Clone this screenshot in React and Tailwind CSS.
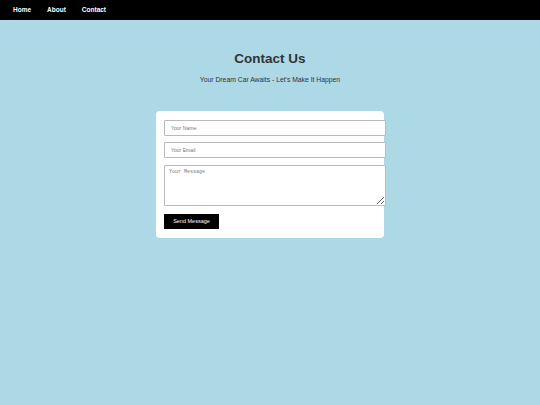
export default function App() {
  return (
    <div className="min-h-[405px] w-full bg-[#add8e6]" style={{ fontFamily: '"Liberation Sans", Arial, sans-serif' }}>
      <nav className="flex h-[20px] items-center gap-[16px] bg-black px-[13px]">
        <a className="text-[6.5px] font-bold text-white">Home</a>
        <a className="text-[6.5px] font-bold text-white">About</a>
        <a className="text-[6.5px] font-bold text-white">Contact</a>
      </nav>
      <div className="flex flex-col items-center">
        <h1 className="mt-[30px] text-[13.5px] font-bold leading-[18px] text-[#333]">Contact Us</h1>
        <p className="mt-[7px] text-[6.8px] leading-[9px] text-[#333]">Your Dream Car Awaits - Let's Make It Happen</p>
        <form className="mt-[27px] flex w-[228px] flex-col rounded-[4px] bg-white px-[8px] py-[9px]">
          <input
            className="h-[16px] w-[222px] rounded-[1px] border border-[#bbb] bg-white px-[6px] text-[5.1px] placeholder:text-[#777]"
            placeholder="Your Name"
          />
          <input
            className="mt-[6px] h-[16px] w-[222px] rounded-[1px] border border-[#bbb] bg-white px-[6px] text-[5.1px] placeholder:text-[#777]"
            placeholder="Your Email"
          />
          <textarea
            className="mt-[7px] h-[41px] w-[222px] rounded-[1px] border border-[#bbb] bg-white px-[4px] py-[3px] text-[5px] placeholder:text-[#777]"
            style={{ fontFamily: '"Liberation Mono", monospace' }}
            placeholder="Your Message"
          />
          <button type="button" className="mt-[8px] h-[15px] w-[55px] bg-black text-[5.5px] text-white">
            Send Message
          </button>
        </form>
      </div>
    </div>
  );
}
